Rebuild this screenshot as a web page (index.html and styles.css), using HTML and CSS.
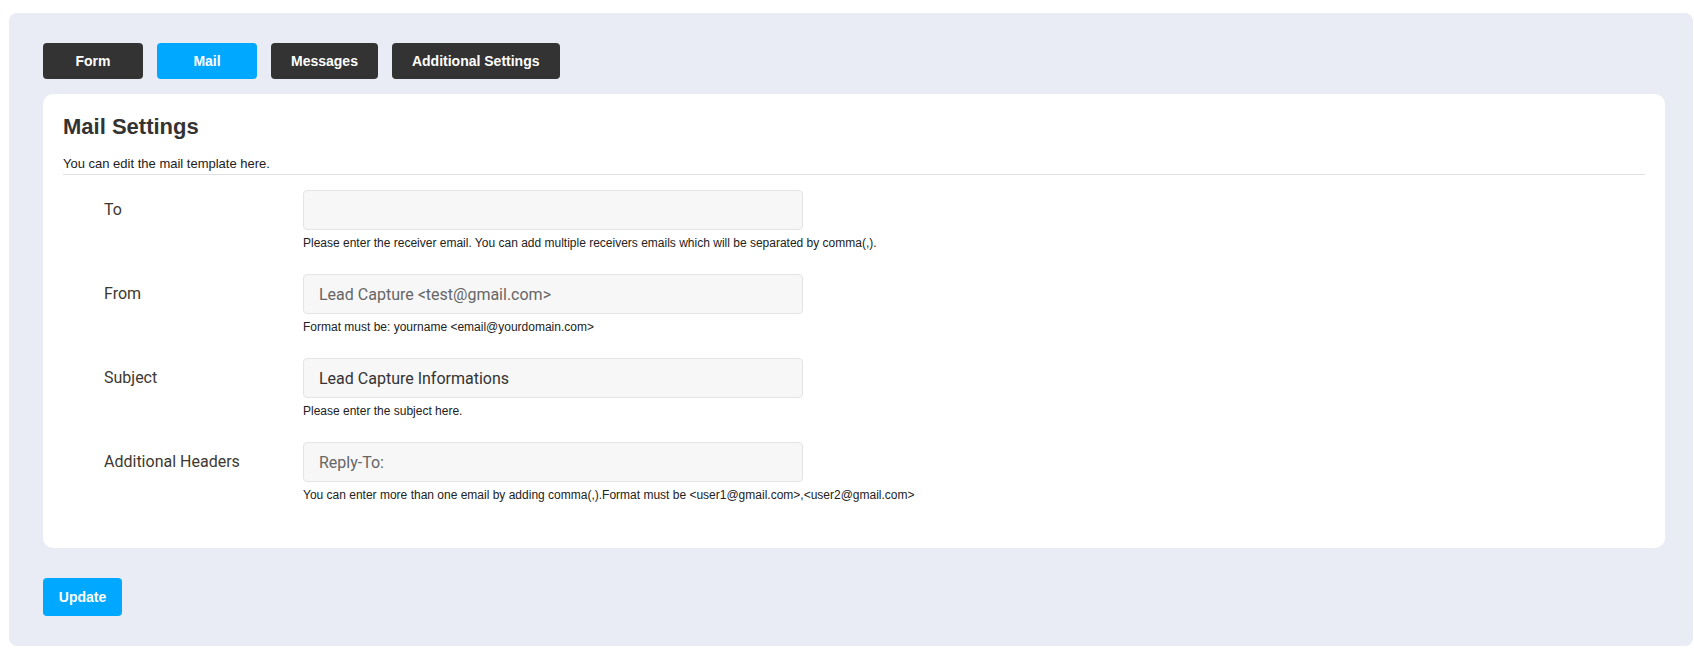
FILE: index.html
```html
<html>
  <head>
    <meta name="viewport" content="width=device-width, initial-scale=1">
    <meta charset="UTF-8">
    <link rel="stylesheet" href="styles.css">
  </head>
  <body>
    <div class="panel">
      <nav class="tabs">
        <a class="tab">Form</a>
        <a class="tab active">Mail</a>
        <a class="tab">Messages</a>
        <a class="tab">Additional Settings</a>
      </nav>

      <section class="card">
        <div class="card-head">
          <h2>Mail Settings</h2>
          <p>You can edit the mail template here.</p>
        </div>

        <form class="mail-form">
          <div class="field">
            <label for="mail_to">To</label>
            <div class="control">
              <input type="text" id="mail_to" name="mail_to"/>
              <span class="hint">Please enter the receiver email. You can add multiple receivers emails which will be separated by comma(,).</span>
            </div>
          </div>
          <div class="field">
            <label for="mail_from">From</label>
            <div class="control">
              <input type="text" id="mail_from" name="mail_from" placeholder="Lead Capture <test@gmail.com>"/>
              <span class="hint">Format must be: yourname &lt;email@yourdomain.com&gt;</span>
            </div>
          </div>
          <div class="field">
            <label for="mail_subject">Subject</label>
            <div class="control">
              <input type="text" id="mail_subject" name="mail_subject" value="Lead Capture Informations"/>
              <span class="hint">Please enter the subject here.</span>
            </div>
          </div>
          <div class="field">
            <label for="mail_headers">Additional Headers</label>
            <div class="control">
              <input type="text" id="mail_headers" name="mail_headers" placeholder="Reply-To:"/>
              <span class="hint">You can enter more than one email by adding comma(,).Format must be &lt;user1@gmail.com&gt;,&lt;user2@gmail.com&gt;</span>
            </div>
          </div>
        </form>
      </section>

      <button type="button" class="update">Update</button>
    </div>
  </body>
</html>
```

FILE: styles.css
```css
:root {
  --panel: #e9ecf4;
  --dark: #333333;
  --blue: #00a8ff;
  --text: #333333;
  --fieldBg: #f7f7f7;
  --fieldBorder: #e4e4e4;
}
body {
  margin: 0;
  background: #ffffff;
  font-family: "Liberation Sans", Arial, sans-serif;
  color: var(--text);
}
.panel {
  margin: 13px 1px 5px 9px;
  padding: 30px 28px 30px 34px;
  background: var(--panel);
  border-radius: 8px;
}
.tabs {
  display: flex;
  gap: 14px;
  margin-bottom: 15px;
}
.tab {
  display: flex;
  align-items: center;
  justify-content: center;
  box-sizing: border-box;
  height: 36px;
  min-width: 100px;
  padding: 0 20px;
  border-radius: 4px;
  background: var(--dark);
  color: #ffffff;
  font-size: 14px;
  font-weight: bold;
  cursor: pointer;
}
.tab.active {
  background: var(--blue);
}
.card {
  background: #ffffff;
  border-radius: 10px;
  padding: 20px 20px 22px 20px;
}
.card-head h2 {
  margin: 0;
  font-size: 22px;
  line-height: 25px;
  color: var(--text);
}
.card-head p {
  margin: 17px 0 0 0;
  padding-bottom: 3px;
  font-size: 13px;
  line-height: 15px;
  color: #222222;
  border-bottom: 1px solid #e0e0e3;
}
.mail-form {
  padding-top: 15px;
}
.field {
  display: grid;
  grid-template-columns: 240px 500px;
  margin-bottom: 24px;
}
.field label {
  padding-left: 41px;
  line-height: 40px;
  font-family: Roboto, "Noto Sans", sans-serif;
  font-size: 16px;
  color: #3d3830;
}
.control input {
  display: block;
  box-sizing: border-box;
  width: 100%;
  height: 40px;
  padding: 0 15px;
  border: 1px solid var(--fieldBorder);
  border-radius: 4px;
  background: var(--fieldBg);
  font-family: Roboto, "Noto Sans", sans-serif;
  font-size: 16px;
  color: #333333;
  outline: none;
}
.control input::placeholder {
  color: #666666;
}
.hint {
  display: block;
  margin-top: 6px;
  font-size: 12px;
  line-height: 14px;
  color: #222222;
  white-space: nowrap;
}
.update {
  display: block;
  margin-top: 30px;
  width: 79px;
  height: 38px;
  border: none;
  border-radius: 4px;
  background: var(--blue);
  color: #ffffff;
  font-family: "Liberation Sans", Arial, sans-serif;
  font-size: 14px;
  font-weight: bold;
  cursor: pointer;
}
```
